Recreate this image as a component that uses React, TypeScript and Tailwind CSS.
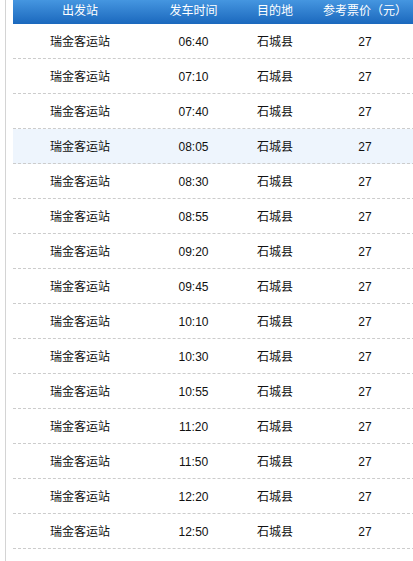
import React from 'react';

const times = ['06:40', '07:10', '07:40', '08:05', '08:30', '08:55', '09:20', '09:45', '10:10', '10:30', '10:55', '11:20', '11:50', '12:20', '12:50'];

const font = { fontFamily: '"Liberation Sans", Arial, "Noto Sans CJK SC", sans-serif' };

export default function App() {
  return (
    <div className="w-[413px] h-[561px] overflow-hidden bg-white text-[12px]" style={font}>
      <div className="ml-[5px] h-full border-l border-[#d4d4d4] pl-[7px]">
        <div className="w-[407px]">
          {/* 表头 */}
          <div className="flex h-[24px] items-center pb-[2px] bg-gradient-to-b from-[#4596e0] to-[#1a68bd] text-white">
            <div className="w-[134px] text-center">出发站</div>
            <div className="w-[93px] text-center">发车时间</div>
            <div className="w-[70px] text-center">目的地</div>
            <div className="w-[110px] text-center">参考票价（元）</div>
          </div>
          {/* 班次列表 */}
          {times.map((t, i) => (
            <div
              key={t}
              className={`flex h-[35px] items-center pt-[1px] border-b border-dashed border-[#cccccc] text-[#111] ${i === 3 ? 'bg-[#eef5fd]' : ''}`}
            >
              <div className="w-[134px] text-center">瑞金客运站</div>
              <div className="w-[93px] text-center">{t}</div>
              <div className="w-[70px] text-center">石城县</div>
              <div className="w-[110px] text-center">27</div>
            </div>
          ))}
        </div>
      </div>
    </div>
  );
}
